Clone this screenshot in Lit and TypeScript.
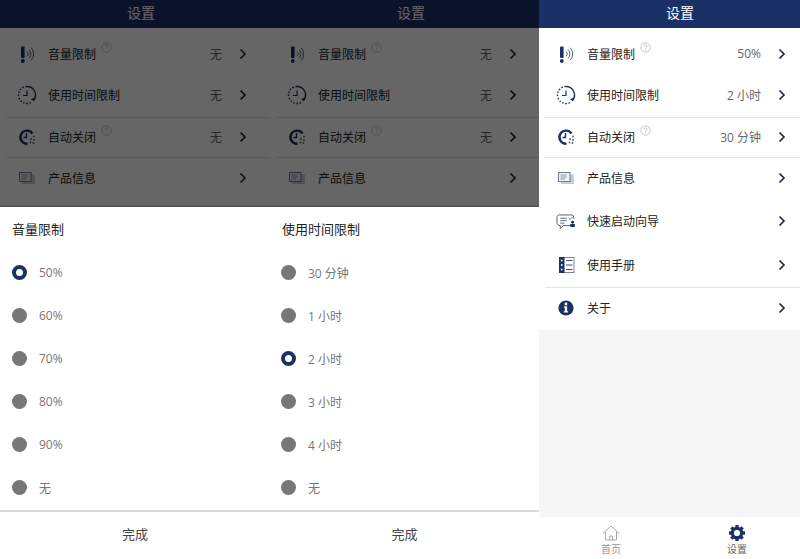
import { LitElement, html, css, svg } from "lit";
import { customElement } from "lit/decorators.js";

const NAVY = "#1a3266";
const icons: Record<string, unknown> = {
  volume: svg`<svg viewBox="0 0 24 24" width="24" height="24"><rect x="6" y="4.500" width="3.600" height="11.500" rx="1" fill="${NAVY}"/><circle cx="7.800" cy="19" r="1.900" fill="${NAVY}"/><g fill="none" stroke="#55617c" stroke-width="1" stroke-linecap="round"><path d="M12.500 10a2.800 2.800 0 0 1 0 4"/><path d="M14.500 8a6 6 0 0 1 0 8"/><path d="M16.500 6a9 9 0 0 1 0 12"/></g></svg>`,
  clock: svg`<svg viewBox="0 0 24 24" width="24" height="24"><path d="M12 3.500a8.500 8.500 0 0 1 7 13.300" fill="none" stroke="#22355f" stroke-width="1.400"/><path d="M12 3.500a8.500 8.500 0 0 0-5 15.400A8.500 8.500 0 0 0 16 19.500" fill="none" stroke="#22355f" stroke-width="1.400" stroke-dasharray="1.600 1.600"/><path d="M12 7.500V12.500H8" fill="none" stroke="#22355f" stroke-width="1.200"/><path d="M20.500 14.500l-1.500 4-3-2.500z" fill="${NAVY}"/></svg>`,
  off: svg`<svg viewBox="0 0 24 24" width="24" height="24"><path d="M17.500 8.500A6.600 6.600 0 1 0 12.500 18.800" fill="none" stroke="${NAVY}" stroke-width="2.400"/><path d="M11.500 8V12.500H8.500" fill="none" stroke="${NAVY}" stroke-width="1.400"/><g fill="#4a5a7c"><circle cx="19" cy="11.500" r=".9"/><circle cx="16" cy="14" r=".9"/><circle cx="19" cy="15" r=".9"/><circle cx="15.500" cy="17.500" r=".9"/><circle cx="18.500" cy="18" r=".9"/></g></svg>`,
  info: svg`<svg viewBox="0 0 24 24" width="24" height="24"><rect x="7" y="8.500" width="13" height="9.500" fill="#c5cad3"/><rect x="4.500" y="6.500" width="11.500" height="9" fill="#eef0f3" stroke="#6f7a8e" stroke-width="1"/><path d="M6.500 9h6M6.500 11h6M6.500 13h4.500" stroke="#8b94a5" stroke-width="1"/></svg>`,
  guide: svg`<svg viewBox="0 0 24 24" width="24" height="24"><g transform="translate(12 12.500) scale(.82) translate(-12 -13)"><path d="M5 5h13.500a3 3 0 0 1 3 3v2M19 18H9l-4 3.500V18a3.500 3.500 0 0 1-4-3.500V8a3 3 0 0 1 4-3" fill="none" stroke="#56617a" stroke-width="1.200"/><path d="M5 9h8M5 12h8M5 15h5" stroke="#56617a" stroke-width="1.100"/><path d="M15.500 9l1.500 1.500 3-3" fill="none" stroke="#56617a" stroke-width="1.100"/><circle cx="20" cy="14" r="1.800" fill="${NAVY}"/><rect x="17" y="16" width="6" height="3.800" rx="1" fill="${NAVY}"/></g></svg>`,
  manual: svg`<svg viewBox="0 0 24 24" width="24" height="24"><rect x="5.500" y="4.500" width="14.500" height="15" fill="#fff" stroke="#7c869a" stroke-width="1"/><rect x="5" y="4" width="5.500" height="16" fill="${NAVY}"/><g fill="#fff"><circle cx="7.700" cy="7.500" r=".9"/><circle cx="7.700" cy="12" r=".9"/><circle cx="7.700" cy="16.500" r=".9"/></g><path d="M12 7.500h6.500M12 12h6.500M12 16.500h6.500" stroke="#46536f" stroke-width="1.200"/></svg>`,
  about: svg`<svg viewBox="0 0 24 24" width="24" height="24"><circle cx="12" cy="12" r="7.600" fill="${NAVY}"/><circle cx="12" cy="8" r="1.400" fill="#fff"/><path d="M10 10.300h3.100v5h1v1.300h-4.300v-1.300h1v-3.700h-.8z" fill="#fff"/></svg>`,
};

const chevron = svg`<svg class="chev" viewBox="0 0 8 12" width="8" height="12"><path d="M1.500 1.500 6 6l-4.500 4.500" fill="none" stroke="#1e2a44" stroke-width="1.700"/></svg>`;
const help = svg`<svg class="help" viewBox="0 0 11 11" width="11" height="11"><circle cx="5.500" cy="5.500" r="4.700" fill="none" stroke="#b9b9b9" stroke-width=".8"/><path d="M4 4.400a1.500 1.500 0 1 1 2.200 1.300c-.5.300-.7.500-.7 1.100M5.500 7.600v.8" fill="none" stroke="#b9b9b9" stroke-width=".8"/></svg>`;
const teeth = [0, 45, 90, 135, 180, 225, 270, 315];
const gear = svg`<svg viewBox="0 0 18 18" width="18" height="18"><g fill="${NAVY}">${teeth.map((a) => svg`<rect x="7.300" y="1" width="3.400" height="4" transform="rotate(${a} 9 9)"/>`)}</g><circle cx="9" cy="9" r="4.700" fill="none" stroke="${NAVY}" stroke-width="3.200"/></svg>`;

interface Row { icon: string; label: string; h: number; help?: boolean; border?: boolean; up?: boolean; key?: number; }
const rows: Row[] = [
  { icon: "volume", label: "音量限制", h: 41, help: true, key: 0 },
  { icon: "clock", label: "使用时间限制", h: 44, border: true, up: true, key: 1 },
  { icon: "off", label: "自动关闭", h: 40, help: true, border: true, up: true, key: 2 },
  { icon: "info", label: "产品信息", h: 41, up: true },
  { icon: "guide", label: "快速启动向导", h: 44 },
  { icon: "manual", label: "使用手册", h: 45, border: true },
  { icon: "about", label: "关于", h: 41, up: true },
];

@customElement("app-root")
export class AppRoot extends LitElement {
  static styles = css`
    :host {
      display: block;
      width: 800px;
      height: 559px;
      overflow: hidden;
      font-family: "Open Sans", "Noto Sans CJK SC", sans-serif;
      background: #fff;
    }
    .screens { display: grid; grid-template-columns: 270px 269px 261px; height: 559px; }
    .screen {
      position: relative;
      display: flex;
      flex-direction: column;
      height: 559px;
      background: #f6f6f6;
      overflow: hidden;
    }
    .header {
      flex: none;
      height: 28px;
      box-sizing: border-box;
      padding: 0 0 5px 127px;
      background: #1a3168;
      color: #fff;
      display: flex;
      align-items: center;
      font-size: 14px;
    }
    .list { flex: none; background: #fff; padding: 5px 0 1px; }
    .list.dim { height: 179px; box-sizing: border-box; }
    .row {
      margin-left: 6px;
      padding-right: calc(100% - 247px);
      box-sizing: border-box;
      display: flex;
      align-items: center;
      font-size: 12px;
      color: #222;
    }
    .row.up { padding-bottom: 2px; }
    .h40 { height: 40px; }
    .h41 { height: 41px; }
    .h44 { height: 44px; }
    .h45 { height: 45px; }
    .row.border { border-bottom: 1px solid #e4e4e4; }
    .ico { width: 24px; height: 24px; margin: 0 9px; flex: none; }
    .ico svg { display: block; }
    .label { display: flex; align-items: flex-start; }
    .help { margin: -3px 0 0 5px; }
    .value { margin-left: auto; color: #666; font-size: 12px; margin-right: 17px; }
    .chev { flex: none; }
    .spacer { margin-left: auto; }
    .tabs {
      margin-top: auto;
      flex: none;
      width: 261px;
      height: 42px;
      box-sizing: border-box;
      padding-left: 9px;
      background: #fff;
      display: grid;
      grid-template-columns: 126px 126px;
    }
    .tab {
      display: flex;
      flex-direction: column;
      align-items: center;
      padding-top: 7px;
      font-size: 10px;
      line-height: 12px;
      color: #999;
    }
    .tab svg { display: block; }
    .tab span { margin-top: 1px; }
    .tab.on { color: #666; }
    .scrim { position: absolute; inset: 0; background: rgba(0,0,0,.6); }
    .sheet {
      position: absolute;
      left: 0; right: 0; bottom: 0;
      height: 352px;
      background: #fff;
      box-shadow: 0 -1px 2px rgba(0,0,0,.3);
      display: flex;
      flex-direction: column;
    }
    .title {
      height: 42px;
      margin-bottom: 2px;
      padding: 0 12px;
      display: flex;
      align-items: center;
      font-size: 13px;
      color: #222;
    }
    .opt {
      height: 43px;
      padding: 0 12px;
      display: flex;
      align-items: center;
      gap: 12px;
      font-size: 12px;
      color: #777;
    }
    .sheet.nudge .opt { padding-left: 11px; }
    .dot {
      width: 15px; height: 15px;
      border-radius: 50%;
      background: #777;
      box-sizing: border-box;
      flex: none;
    }
    .dot.on { background: #fff; border: 4px solid #1a3168; }
    .done {
      height: 49px;
      margin-top: 1px;
      padding-bottom: 4px;
      border-top: 2px solid #d9d9d9;
      box-sizing: border-box;
      display: flex;
      align-items: center;
      justify-content: center;
      font-size: 13px;
      color: #444;
    }
  `;

  private list(values: string[], dim = false) {
    const shown = dim ? rows.slice(0, 4) : rows;
    return html`<div class="list ${dim ? "dim" : ""}">
      ${shown.map((r) => html`
        <div class="row h${r.h} ${r.border ? "border" : ""} ${r.up ? "up" : ""}">
          <span class="ico">${icons[r.icon]}</span>
          <span class="label">${r.label}${r.help ? help : ""}</span>
          ${r.key !== undefined
            ? html`<span class="value">${values[r.key]}</span>`
            : html`<span class="spacer"></span>`}
          ${chevron}
        </div>`)}
    </div>`;
  }

  private tabs() {
    return html`<div class="tabs">
      <div class="tab">
        <svg viewBox="0 0 18 18" width="18" height="18"><path d="M1 9.500 9 2l8 7.500M3.500 8v8h11V8M7.500 16v-4h3v4" fill="none" stroke="#aaa" stroke-width="1"/></svg>
        <span>首页</span>
      </div>
      <div class="tab on">
        ${gear}
        <span>设置</span>
      </div>
    </div>`;
  }

  private sheet(title: string, opts: string[], sel: number, nudge = false) {
    return html`<div class="scrim"></div>
      <div class="sheet ${nudge ? "nudge" : ""}">
        <div class="title">${title}</div>
        ${opts.map((o, i) => html`<div class="opt"><span class="dot ${i === sel ? "on" : ""}"></span><span>${o}</span></div>`)}
        <div class="done">完成</div>
      </div>`;
  }

  render() {
    const none = ["无", "无", "无"];
    return html`<div class="screens">
      <div class="screen">
        <div class="header">设置</div>
        ${this.list(none, true)}
        ${this.sheet("音量限制", ["50%", "60%", "70%", "80%", "90%", "无"], 0)}
      </div>
      <div class="screen">
        <div class="header">设置</div>
        ${this.list(none, true)}
        ${this.sheet("使用时间限制", ["30 分钟", "1 小时", "2 小时", "3 小时", "4 小时", "无"], 2, true)}
      </div>
      <div class="screen">
        <div class="header">设置</div>
        ${this.list(["50%", "2 小时", "30 分钟"])}
        ${this.tabs()}
      </div>
    </div>`;
  }
}
